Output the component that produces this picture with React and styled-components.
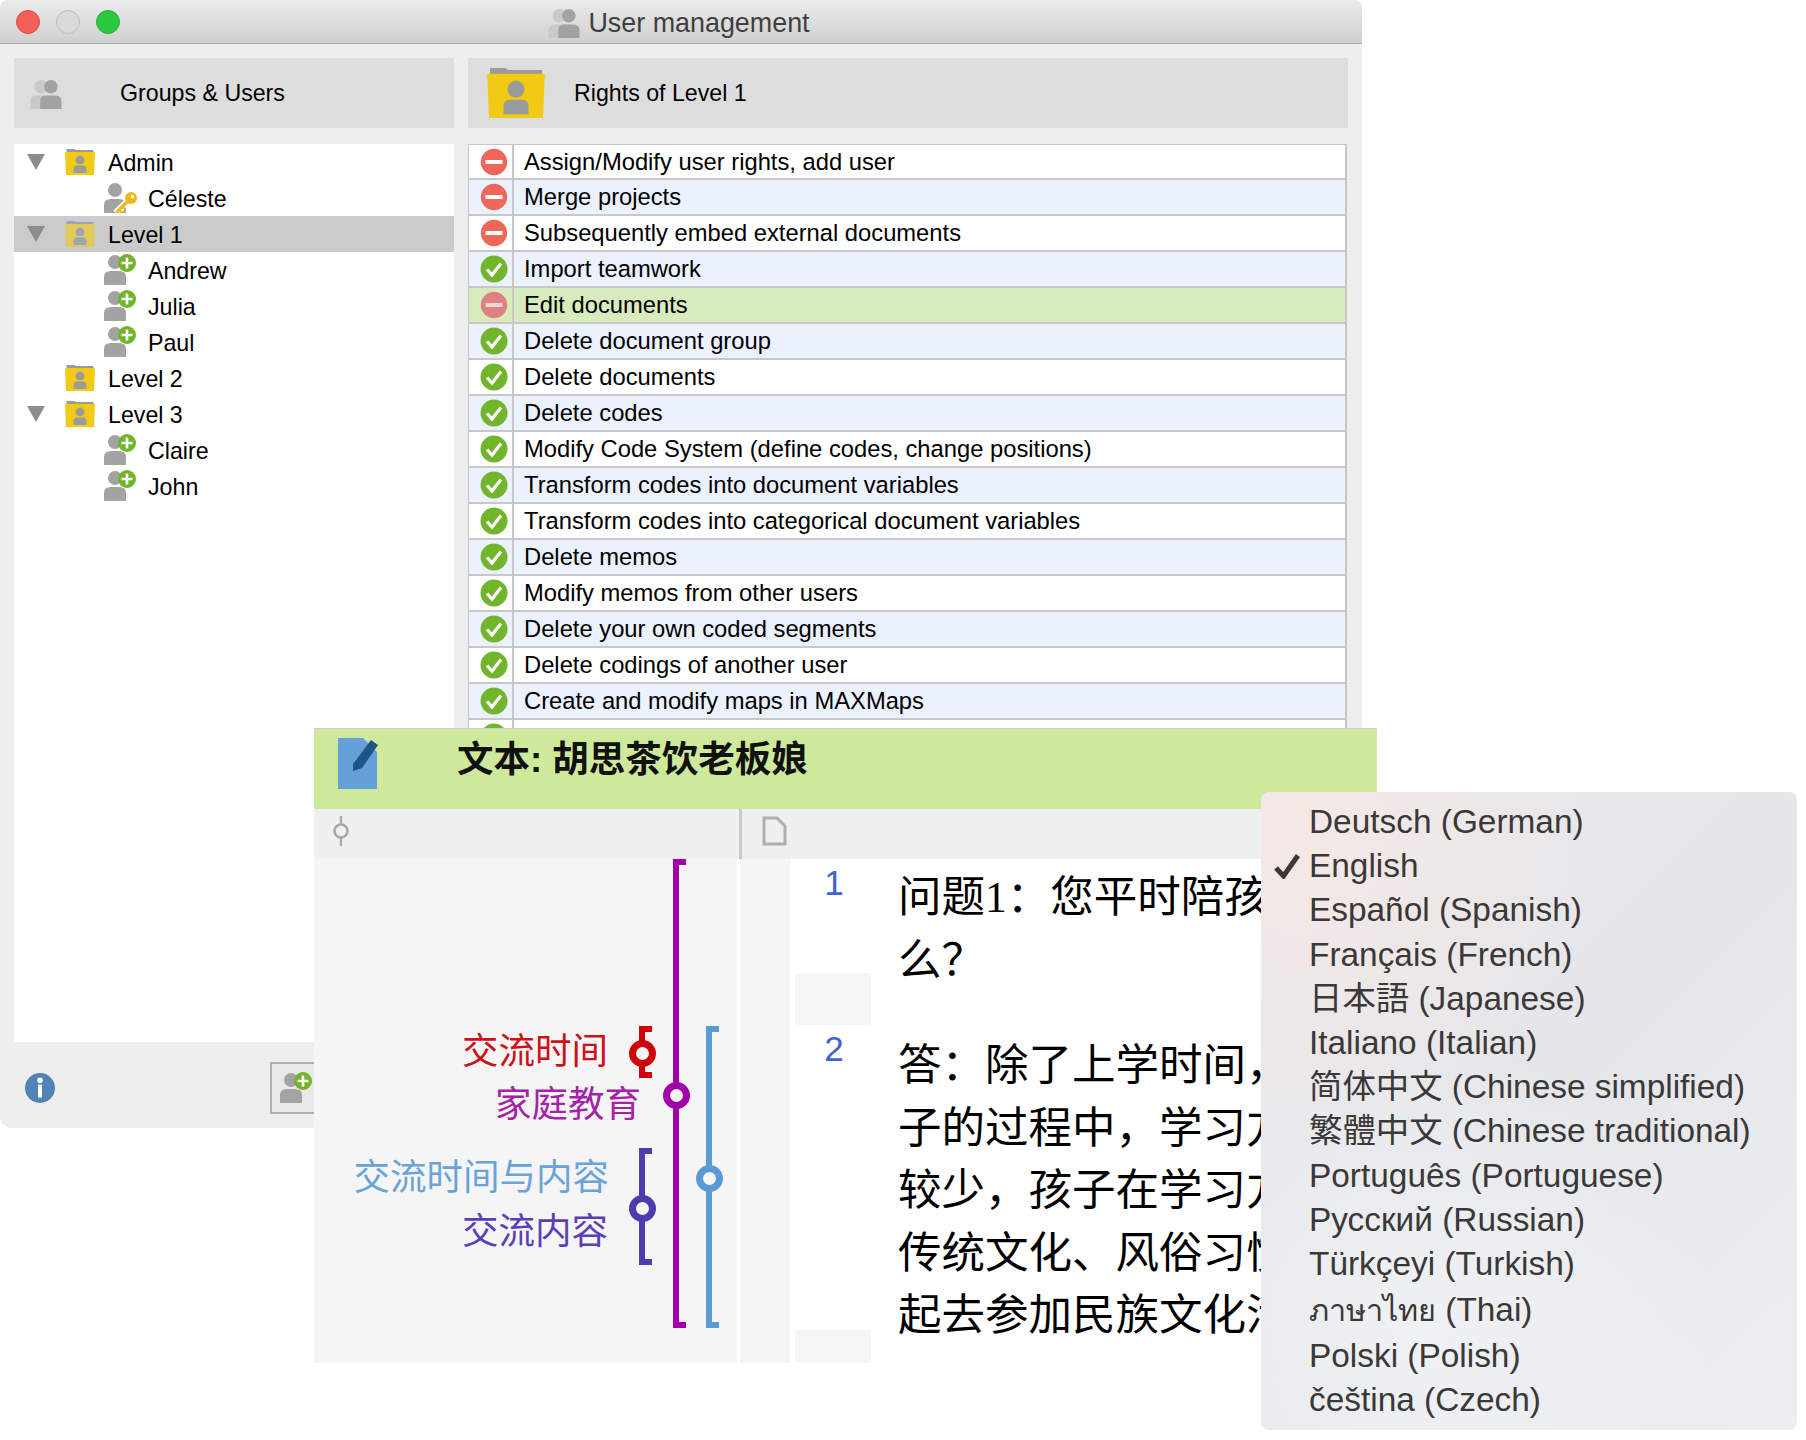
import React from "react";
import styled, { createGlobalStyle } from "styled-components";

const Global = createGlobalStyle`
  html, body { margin: 0; padding: 0; background: #fff; }
  body { font-family: "Liberation Sans", Arial, sans-serif; color: #000; }
  #root { position: relative; width: 1806px; height: 1440px; overflow: hidden; }
`;

const Page = styled.div`
  position: relative;
  width: 1806px;
  height: 1440px;
  background: #fff;
`;

const Window = styled.div`
  width: 1362px;
  height: 1128px;
  background: #eeeeee;
  border-radius: 8px 8px 0 12px;
  overflow: hidden;
  display: flex;
  flex-direction: column;
`;

const TitleBar = styled.div`
  height: 43px;
  flex: none;
  box-sizing: content-box;
  border-bottom: 1px solid #aeaeae;
  background: linear-gradient(#ebebeb, #d0d0d0);
  display: grid;
  grid-template-columns: 1fr auto 1fr;
  align-items: center;
  padding: 0 16px;
`;

const Lights = styled.div`
  display: flex;
  gap: 16px;
`;

const Light = styled.span`
  width: 24px;
  height: 24px;
  border-radius: 50%;
  box-sizing: border-box;
  background: ${(p) => p.$c};
  border: 1px solid ${(p) => p.$b};
`;

const WinTitle = styled.div`
  display: flex;
  align-items: center;
  gap: 8px;
  font-size: 26.9px;
  color: #3f3f3f;
  margin-right: 4px;
`;

const WinTitleText = styled.span`
  padding-top: 4px;
`;

const Columns = styled.div`
  flex: 1;
  display: grid;
  grid-template-columns: 440px 880px;
  column-gap: 14px;
  padding: 14px 14px 0;
`;

const Col = styled.div`
  display: flex;
  flex-direction: column;
  min-height: 0;
`;

const PanelHead = styled.div`
  height: 70px;
  flex: none;
  background: #dddddd;
  margin-bottom: 16px;
  display: flex;
  align-items: center;
  font-size: 23.2px;
`;

const HeadIconSlot = styled.div`
  width: ${(p) => p.$w}px;
  padding-left: ${(p) => p.$pad}px;
  box-sizing: border-box;
  display: flex;
  align-items: center;
  flex: none;
`;

const Tree = styled.div`
  height: 898px;
  flex: none;
  background: #fff;
`;

const TreeRow = styled.div`
  height: 36px;
  display: flex;
  align-items: center;
  font-size: 23.2px;
  padding-left: ${(p) => (p.$child ? 90 : 0)}px;
  background: ${(p) => (p.$selected ? "#cbcbcb" : "transparent")};
`;

const TwistySlot = styled.div`
  width: 51px;
  flex: none;
  padding-left: 13px;
  box-sizing: border-box;
  display: flex;
  align-items: center;
`;

const Twisty = styled.span`
  width: 0;
  height: 0;
  border-left: 9px solid transparent;
  border-right: 9px solid transparent;
  border-top: 16px solid #8d8d8d;
`;

const TreeLabel = styled.span`
  margin-left: ${(p) => p.$gap}px;
  padding-top: 2px;
`;

const Footer = styled.div`
  flex: 1;
  display: flex;
  align-items: center;
  padding: 6px 0 0 11px;
`;

const AddButton = styled.div`
  width: 70px;
  height: 52px;
  margin-left: 215px;
  box-sizing: border-box;
  border: 2px solid #b0b0b0;
  background: #e9e9e9;
  padding: 6px 0 0 8px;
  flex: none;
`;

const Rights = styled.div`
  width: 879px;
  box-sizing: border-box;
  border-left: 1px solid #c6c6c6;
  border-right: 2px solid #c6c6c6;
`;

const RightRow = styled.div`
  height: 36px;
  box-sizing: border-box;
  border-top: ${(p) => (p.$first ? "1px solid #c6c6c6" : "0")};
  border-bottom: 2px solid #c8c8c8;
  display: flex;
  align-items: center;
  font-size: 23.75px;
  background: ${(p) =>
    p.$tone === "green" ? "#d8ebbd" : p.$tone === "blue" ? "#ebf1fd" : "#fff"};
`;

const StatusCell = styled.div`
  width: 45px;
  height: 100%;
  flex: none;
  box-sizing: border-box;
  border-right: 2px solid #c8c8c8;
  padding-left: 7px;
  display: flex;
  align-items: center;
  justify-content: center;
`;

const RightText = styled.span`
  padding-left: 10px;
`;

/* floating captures */
const Capture = styled.div`
  position: absolute;
  left: 314px;
  top: 728px;
  width: 1063px;
  height: 635px;
  border-top: 1px solid #cfcfcf;
  box-sizing: border-box;
  background: #fff;
  display: flex;
  flex-direction: column;
  overflow: hidden;
`;

const GreenBar = styled.div`
  height: 80px;
  flex: none;
  background: #cfe99b;
  display: flex;
  align-items: flex-start;
  padding: 9px 0 0 24px;
  box-sizing: border-box;
`;

const DocTitle = styled.div`
  margin: 0 0 0 79px;
  font-family: "Liberation Sans", "Noto Sans CJK SC", sans-serif;
  font-weight: 700;
  font-size: 36.5px;
  line-height: 44px;
  color: #111;
  white-space: nowrap;
`;

const ToolBar = styled.div`
  height: 50px;
  flex: none;
  display: flex;
  background: #eeefef;
`;

const ToolLeft = styled.div`
  width: 425px;
  flex: none;
  box-sizing: border-box;
  background: #f0f0f0;
  padding: 6px 0 0 19px;
`;

const ToolDivider = styled.div`
  width: 3px;
  flex: none;
  background: #c9c9c9;
`;

const ToolRight = styled.div`
  flex: 1;
  padding: 7px 0 0 20px;
`;

const CaptureBody = styled.div`
  flex: 1;
  display: flex;
  min-height: 0;
`;

const StripCanvas = styled.div`
  position: relative;
  width: 423px;
  flex: none;
  background: #f5f5f5;
`;

const Bracket = styled.div`
  position: absolute;
  left: ${(p) => p.$left}px;
  top: ${(p) => p.$top}px;
  height: ${(p) => p.$height}px;
  width: 13px;
  box-sizing: border-box;
  border: solid ${(p) => p.$color};
  border-width: 6px 0 6px 6px;
`;

const Knob = styled.span`
  position: absolute;
  left: -16.5px;
  top: ${(p) => p.$at - 19.5}px;
  width: 27px;
  height: 27px;
  box-sizing: border-box;
  border-radius: 50%;
  border: 7px solid ${(p) => p.$color};
  background: #f5f5f5;
`;

const CodeLabel = styled.span`
  position: absolute;
  right: ${(p) => p.$right}px;
  top: ${(p) => p.$y - 25}px;
  line-height: 50px;
  font-family: "Noto Sans CJK SC", sans-serif;
  font-size: 36.5px;
  color: ${(p) => p.$color};
  white-space: nowrap;
`;

const Gutter = styled.div`
  width: 50px;
  flex: none;
  margin: 0 5px 0 3px;
  background: #f5f5f5;
`;

const NumberCol = styled.div`
  width: 76px;
  flex: none;
  display: flex;
  flex-direction: column;
`;

const NumCell = styled.div`
  height: ${(p) => p.$h}px;
  flex: none;
  padding-top: ${(p) => p.$pad}px;
  padding-left: 2px;
  box-sizing: border-box;
  text-align: center;
  font-size: 35px;
  line-height: 33px;
  color: #3d63d2;
`;

const NumGap = styled.div`
  height: ${(p) => p.$h}px;
  flex: none;
  background: #f6f6f6;
`;

const TextCol = styled.div`
  flex: 1;
  padding: 7px 0 0 27px;
  font-family: "Liberation Serif", "Noto Sans CJK SC", serif;
  font-size: 43.5px;
  line-height: 62.5px;
  color: #000;
  white-space: nowrap;
`;

const Para = styled.p`
  margin: 0 0 43px;
`;

const Line = styled.span`
  display: block;
`;

/* language menu */
const Menu = styled.div`
  position: absolute;
  left: 1261px;
  top: 792px;
  width: 536px;
  height: 638px;
  box-sizing: border-box;
  padding-top: 8px;
  border-radius: 8px;
  background:
    radial-gradient(circle at 6% 8%, #f4e8e6 0, rgba(244, 232, 230, 0) 38%),
    radial-gradient(circle at 30% 85%, #eff2f5 0, rgba(239, 242, 245, 0) 45%),
    linear-gradient(135deg, #ebe9ea, #e5e6ea 50%, #edeef0);
  color: #3b3838;
  font-size: 33.4px;
  line-height: 44px;
  font-family: "Liberation Sans", "Noto Sans CJK JP", "Noto Sans", sans-serif;
`;

const MenuItem = styled.div`
  height: ${(p) => (p.$tall ? 48 : 44.2)}px;
  display: flex;
  align-items: center;
  white-space: nowrap;
`;

const CheckSlot = styled.span`
  width: 48px;
  flex: none;
  padding-left: 13px;
  box-sizing: border-box;
  display: flex;
`;

const ThaiWord = styled.span`
  font-size: 30.6px;
`;

/* drawings */
const Person = ({ fill = "#a3a3a3", x = 0 }) => (
  <g fill={fill} transform={`translate(${x} 0)`}>
    <circle cx="11" cy="10" r="7" />
    <path d="M0 33V25Q0 19 7 19H15Q22 19 22 25V33Z" />
  </g>
);

const UserPlus = () => (
  <svg width="34" height="36" viewBox="0 0 34 36">
    <Person />
    <circle cx="23" cy="11" r="9" fill="#72b52a" />
    <path d="M23 5.5V16.5M17.5 11H28.5" stroke="#fff" strokeWidth="2.6" />
  </svg>
);

const UserKey = () => (
  <svg width="34" height="36" viewBox="0 0 34 36">
    <Person />
    <path d="M12 33L23 22" stroke="#fff" strokeWidth="7" />
    <path d="M12.5 32.5L24 21" stroke="#ecb920" strokeWidth="3.2" fill="none" />
    <path d="M15 30l3 3M18.5 26.5l3 3" stroke="#ecb920" strokeWidth="2.4" fill="none" />
    <circle cx="27" cy="18" r="6" fill="#ecb920" />
    <circle cx="28.5" cy="16.5" r="1.8" fill="#fff" />
  </svg>
);

const Group = ({ size = 32 }) => (
  <svg width={size} height={size} viewBox="0 0 32 33">
    <Person fill="#c9c9c9" />
    <Person fill="#a2a2a2" x={10} />
  </svg>
);

const Folder = ({ width = 30, height = 26, faded }) => (
  <svg width={width} height={height} viewBox="0 0 30 26" style={{ flex: "none", opacity: faded ? 0.62 : 1 }}>
    <path d="M1.5 3V0H9.5L11 1H28.5V4H1.5Z" fill={faded ? "#7f8ea8" : "#9b9b9b"} />
    <path d="M0 3H30L29 26H1Z" fill="#f0ca15" />
    <circle cx="15" cy="11" r="4.4" fill={faded ? "#7f8ea8" : "#9b9b9b"} />
    <path d="M8.5 24V20Q8.5 16.5 12 16.5H18Q21.5 16.5 21.5 20V24Z" fill={faded ? "#7f8ea8" : "#9b9b9b"} />
  </svg>
);

const Status = ({ kind }) => {
  if (kind === "ok") {
    return (
      <svg width="28" height="28" viewBox="0 0 28 28">
        <circle cx="14" cy="14" r="13.5" fill="#70b52c" />
        <path d="M7 14.5L12 20L21 8.5" fill="none" stroke="#fff" strokeWidth="3.2" />
      </svg>
    );
  }
  const faded = kind === "faded";
  return (
    <svg width="28" height="28" viewBox="0 0 28 28">
      <circle cx="14" cy="14" r="13.2" fill={faded ? "#df8182" : "#f0675a"} />
      <rect x="5.5" y="12" width="17" height="4" fill={faded ? "#f0d5d5" : "#fff"} />
    </svg>
  );
};

const Info = () => (
  <svg width="30" height="30" viewBox="0 0 30 30" style={{ flex: "none" }}>
    <circle cx="15" cy="15" r="15" fill="#5083b6" />
    <circle cx="15" cy="7.2" r="2.8" fill="#fff" />
    <rect x="13" y="11.5" width="4" height="13" fill="#fff" />
  </svg>
);

const NoteIcon = () => (
  <svg width="40" height="52" viewBox="0 0 40 52" style={{ flex: "none" }}>
    <path d="M0 0H25L39 14V51H0Z" fill="#66a0d8" />
    <path d="M15 26L33 2L40 7L24 30L15 33Z" fill="#1c5587" />
  </svg>
);

const PinIcon = () => (
  <svg width="16" height="32" viewBox="0 0 16 32">
    <path d="M8 1V9M8 23V31" stroke="#a9a9a9" strokeWidth="2.4" />
    <circle cx="8" cy="16" r="6.5" fill="none" stroke="#a9a9a9" strokeWidth="2.6" />
  </svg>
);

const PageIcon = () => (
  <svg width="25" height="30" viewBox="0 0 25 30">
    <path d="M2 2H15L23 10V28H2Z" fill="none" stroke="#aeaeae" strokeWidth="3" />
  </svg>
);

const Check = () => (
  <svg width="26" height="26" viewBox="0 0 26 26">
    <path d="M2 15L9.5 23L24 2.5" fill="none" stroke="#3b3838" strokeWidth="5" />
  </svg>
);

const tree = [
  { label: "Admin", twisty: true },
  { label: "Céleste", child: true, key: true },
  { label: "Level 1", twisty: true, selected: true },
  { label: "Andrew", child: true },
  { label: "Julia", child: true },
  { label: "Paul", child: true },
  { label: "Level 2" },
  { label: "Level 3", twisty: true },
  { label: "Claire", child: true },
  { label: "John", child: true },
];

const rights = [
  ["Assign/Modify user rights, add user", "deny"],
  ["Merge projects", "deny"],
  ["Subsequently embed external documents", "deny"],
  ["Import teamwork", "ok"],
  ["Edit documents", "faded"],
  ["Delete document group", "ok"],
  ["Delete documents", "ok"],
  ["Delete codes", "ok"],
  ["Modify Code System (define codes, change positions)", "ok"],
  ["Transform codes into document variables", "ok"],
  ["Transform codes into categorical document variables", "ok"],
  ["Delete memos", "ok"],
  ["Modify memos from other users", "ok"],
  ["Delete your own coded segments", "ok"],
  ["Delete codings of another user", "ok"],
  ["Create and modify maps in MAXMaps", "ok"],
  ["", "ok"],
];

const languages = [
  "Deutsch (German)",
  "English",
  "Español (Spanish)",
  "Français (French)",
  "日本語 (Japanese)",
  "Italiano (Italian)",
  "简体中文 (Chinese simplified)",
  "繁體中文 (Chinese traditional)",
  "Português (Portuguese)",
  "Русский (Russian)",
  "Türkçeyi (Turkish)",
  <><ThaiWord>ภาษาไทย</ThaiWord> (Thai)</>,
  "Polski (Polish)",
  "čeština (Czech)",
];

export default function App() {
  return (
    <Page>
      <Global />
      <Window>
        <TitleBar>
          <Lights>
            <Light $c="#f5605a" $b="#e0493f" />
            <Light $c="#d9d9d9" $b="#bdbdbd" />
            <Light $c="#2bc840" $b="#22b034" />
          </Lights>
          <WinTitle>
            <Group />
            <WinTitleText>User management</WinTitleText>
          </WinTitle>
          <span />
        </TitleBar>
        <Columns>
          <Col>
            <PanelHead>
              <HeadIconSlot $w={106} $pad={16}>
                <Group />
              </HeadIconSlot>
              Groups &amp; Users
            </PanelHead>
            <Tree>
              {tree.map((n) => (
                <TreeRow key={n.label} $child={n.child} $selected={n.selected}>
                  {n.child ? (
                    <>
                      {n.key ? <UserKey /> : <UserPlus />}
                      <TreeLabel $gap={10}>{n.label}</TreeLabel>
                    </>
                  ) : (
                    <>
                      <TwistySlot>{n.twisty && <Twisty />}</TwistySlot>
                      <Folder faded={n.selected} />
                      <TreeLabel $gap={13}>{n.label}</TreeLabel>
                    </>
                  )}
                </TreeRow>
              ))}
            </Tree>
            <Footer>
              <Info />
              <AddButton>
                <UserPlus />
              </AddButton>
            </Footer>
          </Col>
          <Col>
            <PanelHead>
              <HeadIconSlot $w={106} $pad={18}>
                <Folder width={60} height={50} />
              </HeadIconSlot>
              Rights of Level 1
            </PanelHead>
            <Rights>
              {rights.map(([label, kind], i) => {
                const tone = kind === "faded" ? "green" : i % 2 ? "blue" : "white";
                return (
                  <RightRow key={i} $tone={tone} $first={i === 0}>
                    <StatusCell>
                      <Status kind={kind} />
                    </StatusCell>
                    <RightText>{label}</RightText>
                  </RightRow>
                );
              })}
            </Rights>
          </Col>
        </Columns>
      </Window>

      <Capture>
        <GreenBar>
          <NoteIcon />
          <DocTitle>文本: 胡思茶饮老板娘</DocTitle>
        </GreenBar>
        <ToolBar>
          <ToolLeft>
            <PinIcon />
          </ToolLeft>
          <ToolDivider />
          <ToolRight>
            <PageIcon />
          </ToolRight>
        </ToolBar>
        <CaptureBody>
          <StripCanvas>
            <CodeLabel $right={129} $y={190} $color="#cf1018">交流时间</CodeLabel>
            <CodeLabel $right={96} $y={243} $color="#a522a8">家庭教育</CodeLabel>
            <CodeLabel $right={128} $y={316} $color="#6aa3d8">交流时间与内容</CodeLabel>
            <CodeLabel $right={129} $y={370} $color="#5a3fb5">交流内容</CodeLabel>
            <Bracket $left={359} $top={0} $height={469} $color="#a100a8">
              <Knob $at={236} $color="#a100a8" />
            </Bracket>
            <Bracket $left={392} $top={167} $height={302} $color="#5b9bd3">
              <Knob $at={152} $color="#5b9bd3" />
            </Bracket>
            <Bracket $left={325} $top={167} $height={52} $color="#d0000b">
              <Knob $at={27} $color="#d0000b" />
            </Bracket>
            <Bracket $left={325} $top={289} $height={117} $color="#4f3bb0">
              <Knob $at={60} $color="#4f3bb0" />
            </Bracket>
          </StripCanvas>
          <Gutter />
          <NumberCol>
            <NumCell $h={114} $pad={7}>1</NumCell>
            <NumGap $h={52} />
            <NumCell $h={305} $pad={7}>2</NumCell>
            <NumGap $h={33} />
          </NumberCol>
          <TextCol>
            <Para>
              <Line>问题1：您平时陪孩</Line>
              <Line>么？</Line>
            </Para>
            <Para>
              <Line>答：除了上学时间，</Line>
              <Line>子的过程中，学习方</Line>
              <Line>较少，孩子在学习方</Line>
              <Line>传统文化、风俗习惯</Line>
              <Line>起去参加民族文化活</Line>
            </Para>
          </TextCol>
        </CaptureBody>
      </Capture>

      <Menu>
        {languages.map((l, i) => (
          <MenuItem key={i} $tall={i === 11}>
            <CheckSlot>{i === 1 && <Check />}</CheckSlot>
            <span>{l}</span>
          </MenuItem>
        ))}
      </Menu>
    </Page>
  );
}
